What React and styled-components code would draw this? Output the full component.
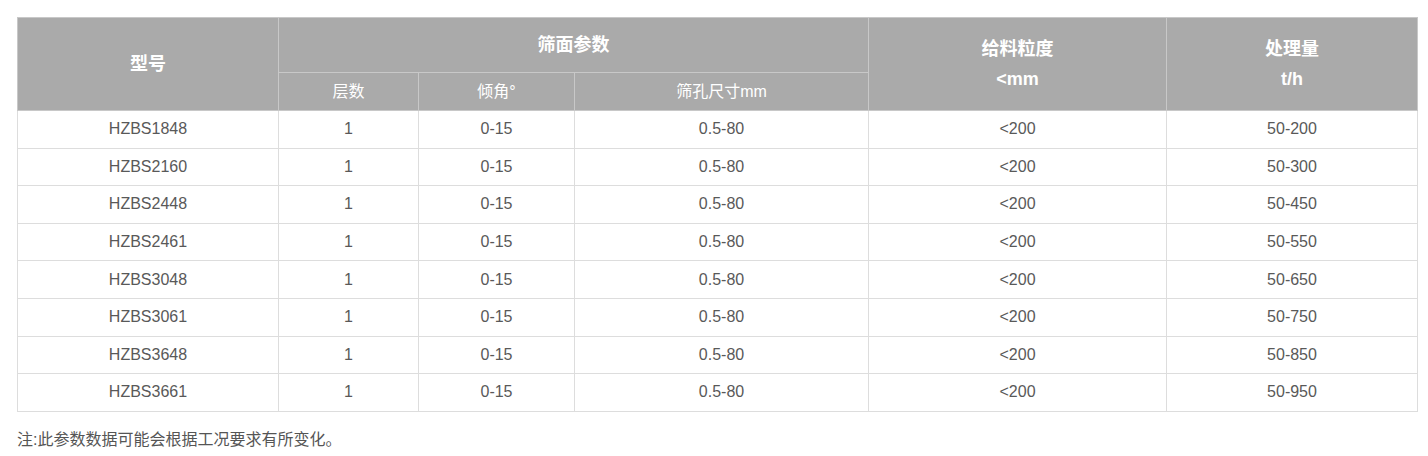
import React from "react";
import styled, { createGlobalStyle } from "styled-components";

const Global = createGlobalStyle`
  body {
    margin: 0;
    background: #fff;
    font-family: "Liberation Sans", Arial, "Noto Sans CJK SC", sans-serif;
  }
`;

const Page = styled.div`
  padding: 17px 12px 0 17px;
`;

const Table = styled.table`
  width: 1400px;
  border-collapse: collapse;
  table-layout: fixed;
  font-size: 16px;
  color: #595959;
`;

const HeadCell = styled.th`
  background: #aaaaaa;
  color: #fff;
  font-weight: ${(p) => (p.$sub ? "normal" : "bold")};
  font-size: ${(p) => (p.$sub ? "16px" : "18px")};
  line-height: 30px;
  text-align: center;
  border: 1px solid #c8c8c8;
  height: ${(p) => (p.$sub ? "37px" : "54px")};
  padding: 0;
`;

const Cell = styled.td`
  border: 1px solid #dddddd;
  text-align: center;
  height: 36.6px;
  padding: 0;
`;

const Note = styled.p`
  margin: 17px 0 0;
  font-size: 16px;
  line-height: 22px;
  color: #555;
`;

const rows = [
  ["HZBS1848", "50-200"],
  ["HZBS2160", "50-300"],
  ["HZBS2448", "50-450"],
  ["HZBS2461", "50-550"],
  ["HZBS3048", "50-650"],
  ["HZBS3061", "50-750"],
  ["HZBS3648", "50-850"],
  ["HZBS3661", "50-950"],
];

export default function App() {
  return (
    <Page>
      <Global />
      <Table>
        <colgroup>
          <col style={{ width: 261 }} />
          <col style={{ width: 140 }} />
          <col style={{ width: 156 }} />
          <col style={{ width: 294 }} />
          <col style={{ width: 298 }} />
          <col style={{ width: 251 }} />
        </colgroup>
        <thead>
          <tr>
            <HeadCell rowSpan={2}>型号</HeadCell>
            <HeadCell colSpan={3}>筛面参数</HeadCell>
            <HeadCell rowSpan={2}>
              给料粒度
              <br />
              &lt;mm
            </HeadCell>
            <HeadCell rowSpan={2}>
              处理量
              <br />
              t/h
            </HeadCell>
          </tr>
          <tr>
            <HeadCell $sub>层数</HeadCell>
            <HeadCell $sub>倾角°</HeadCell>
            <HeadCell $sub>筛孔尺寸mm</HeadCell>
          </tr>
        </thead>
        <tbody>
          {rows.map(([model, cap]) => (
            <tr key={model}>
              <Cell>{model}</Cell>
              <Cell>1</Cell>
              <Cell>0-15</Cell>
              <Cell>0.5-80</Cell>
              <Cell>&lt;200</Cell>
              <Cell>{cap}</Cell>
            </tr>
          ))}
        </tbody>
      </Table>
      <Note>注:此参数数据可能会根据工况要求有所变化。</Note>
    </Page>
  );
}
